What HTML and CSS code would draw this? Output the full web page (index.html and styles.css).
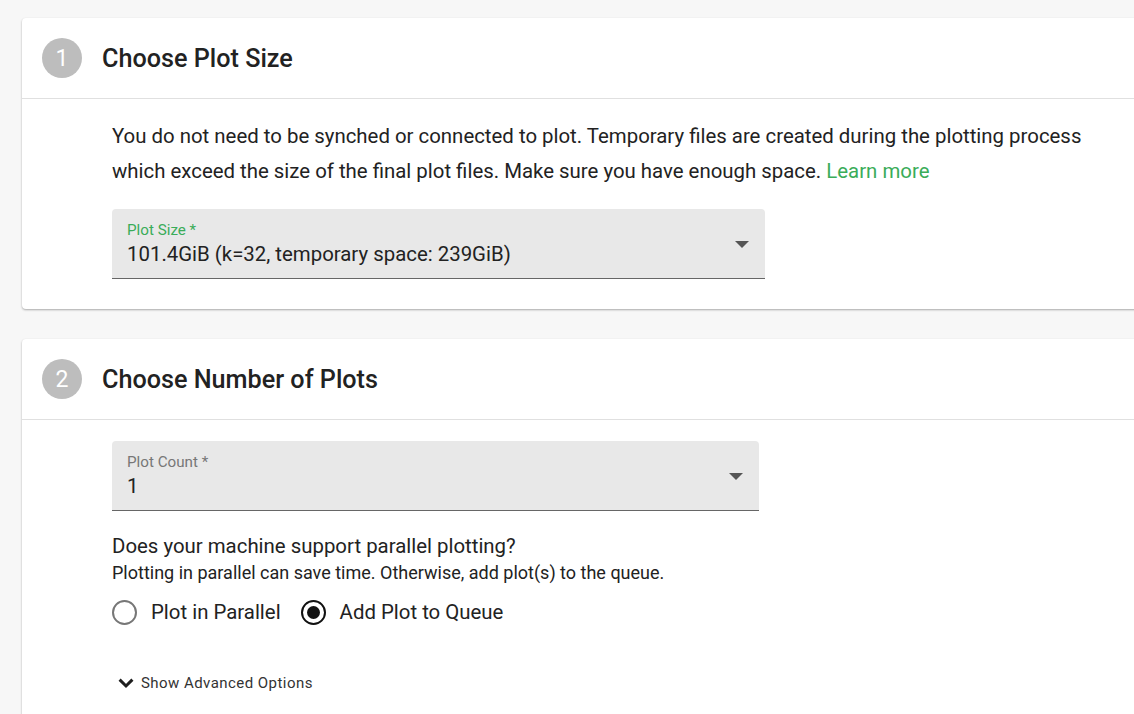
FILE: index.html
```html
<!DOCTYPE html>
<html>
<head>
<meta charset="utf-8">
<link rel="stylesheet" href="styles.css">
</head>
<body>
<div class="page">
  <section class="card card1">
    <header class="card-head">
      <span class="step">1</span>
      <h2 class="title">Choose Plot Size</h2>
    </header>
    <div class="card-body">
      <p class="lead">You do not need to be synched or connected to plot. Temporary files are created during the plotting process which exceed the size of the final plot files. Make sure you have enough space. <a class="link" href="#">Learn more</a></p>
      <div class="select select-size">
        <div class="select-text">
          <span class="label label-focus">Plot Size *</span>
          <span class="value">101.4GiB (k=32, temporary space: 239GiB)</span>
        </div>
        <span class="caret"></span>
      </div>
    </div>
  </section>

  <section class="card card2">
    <header class="card-head">
      <span class="step">2</span>
      <h2 class="title">Choose Number of Plots</h2>
    </header>
    <div class="card-body body2">
      <div class="select select-count">
        <div class="select-text">
          <span class="label">Plot Count *</span>
          <span class="value">1</span>
        </div>
        <span class="caret"></span>
      </div>
      <div class="question">
        <p class="q">Does your machine support parallel plotting?</p>
        <p class="hint">Plotting in parallel can save time. Otherwise, add plot(s) to the queue.</p>
      </div>
      <div class="radios">
        <label class="radio"><span class="circle"></span>Plot in Parallel</label>
        <label class="radio checked"><span class="circle"></span>Add Plot to Queue</label>
      </div>
      <button class="adv">
        <svg width="16" height="11" viewBox="0 0 16 11"><polyline points="1.6,1.6 8,8 14.4,1.6" fill="none" stroke="#1e1e1e" stroke-width="3"/></svg>
        <span>Show Advanced Options</span>
      </button>
    </div>
  </section>
</div>
</body>
</html>
```
FILE: styles.css
```css
html, body {
  margin: 0;
  padding: 0;
  background: #f7f7f7;
  overflow: hidden;
  font-family: Roboto, "Liberation Sans", sans-serif;
  color: #222;
}
.page {
  padding: 18px 0 0 22px;
  display: flex;
  flex-direction: column;
  gap: 30px;
}
.card {
  background: #fff;
  width: 1140px;
  border-radius: 4px;
  box-shadow: 0 1px 2px rgba(0,0,0,0.25), 0 1px 3px rgba(0,0,0,0.08);
}
.card-head {
  display: flex;
  align-items: center;
  height: 81px;
  padding-left: 20px;
  border-bottom: 1px solid #e0e0e0;
  box-sizing: border-box;
}
.step {
  width: 40px;
  height: 40px;
  border-radius: 50%;
  background: #bdbdbd;
  color: #fff;
  font-size: 23px;
  display: flex;
  align-items: center;
  justify-content: center;
  margin-right: 20px;
}
.title {
  margin: 0;
  font-size: 25.2px;
  font-weight: 500;
  color: #222;
}
.card-body {
  padding: 20px 0 30px 90px;
}
.lead {
  margin: 0 0 20px;
  font-size: 20.4px;
  line-height: 35px;
  width: 1000px;
  color: #222;
}
.link {
  color: #3aac59;
  text-decoration: none;
}
.select {
  background: #e8e8e8;
  border-radius: 4px 4px 0 0;
  border-bottom: 1px solid #666;
  height: 70px;
  box-sizing: border-box;
  display: flex;
  align-items: center;
  justify-content: space-between;
  padding: 0 16px 0 15px;
}
.select-size { width: 653px; }
.select-count { width: 647px; }
.select-text {
  display: flex;
  flex-direction: column;
  padding-top: 3px;
}
.label {
  font-size: 15.2px;
  color: #777;
  line-height: 18px;
}
.label-focus { color: #3aac59; }
.value {
  font-size: 20.4px;
  line-height: 31px;
  color: #222;
}
.caret {
  width: 0;
  height: 0;
  border-left: 7px solid transparent;
  border-right: 7px solid transparent;
  border-top: 7px solid #555;
  margin-top: 2px;
}
.body2 { padding-top: 21px; padding-bottom: 40px; }
.question { margin-top: 21px; }
.q {
  margin: 0;
  font-size: 20.4px;
  line-height: 28px;
}
.hint {
  margin: 0;
  font-size: 18px;
  line-height: 26px;
}
.radios {
  display: flex;
  gap: 20px;
  margin-top: 11px;
  height: 30px;
  align-items: center;
}
.radio {
  display: flex;
  align-items: center;
  font-size: 20.4px;
  gap: 14px;
}
.circle {
  width: 25px;
  height: 25px;
  border: 2.5px solid #777;
  border-radius: 50%;
  box-sizing: border-box;
  display: flex;
  align-items: center;
  justify-content: center;
}
.checked .circle { border-color: #111; }
.checked .circle::after {
  content: "";
  width: 13px;
  height: 13px;
  border-radius: 50%;
  background: #111;
}
.adv {
  margin-top: 47px;
  display: flex;
  align-items: center;
  gap: 7px;
  background: none;
  border: 0;
  padding: 0 0 0 6px;
  font-family: Roboto, "Liberation Sans", sans-serif;
  font-size: 15px;
  letter-spacing: 0.45px;
  color: #333;
}
```
